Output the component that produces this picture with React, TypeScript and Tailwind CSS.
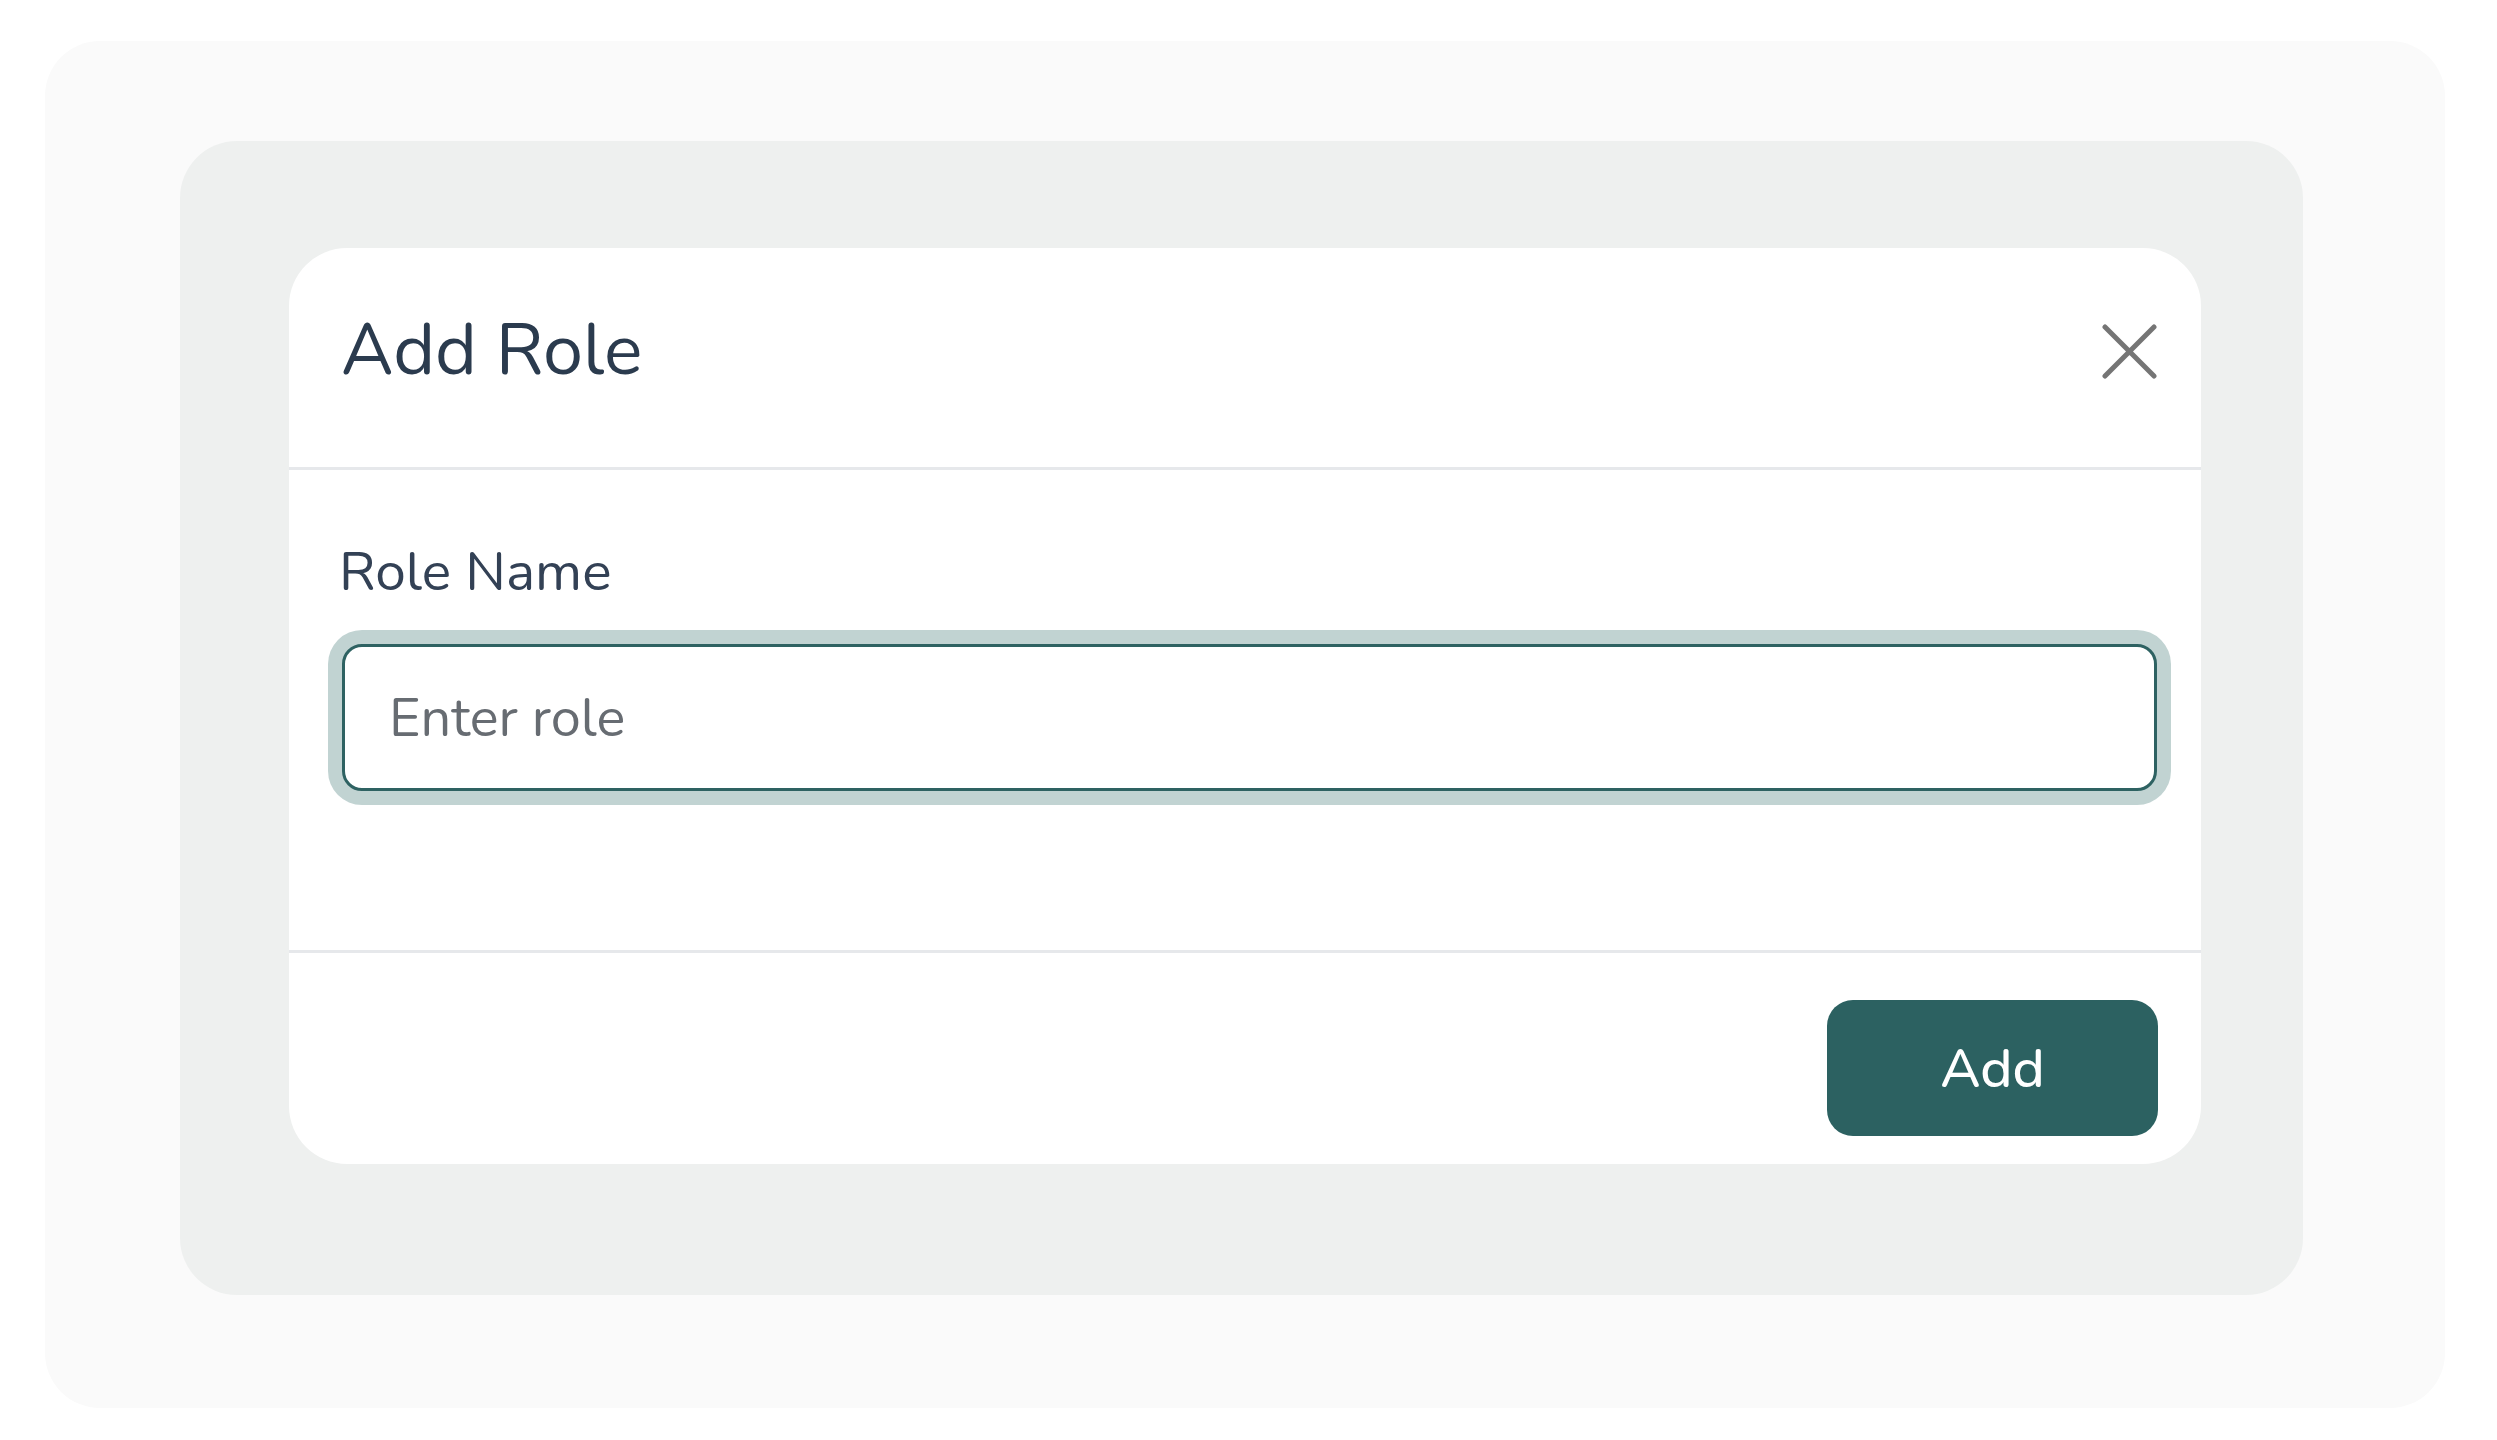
import React from "react";

export default function App() {
  return (
    <div
      className="min-h-screen w-full bg-white pt-[41px] pl-[45px]"
      style={{ fontFamily: "Nunito, Lato, 'Noto Sans', sans-serif" }}
    >
      <div className="w-[2400px] h-[1367px] rounded-[55px] bg-[#fafafa] pt-[100px] pl-[135px]">
        <div className="w-[2123px] h-[1154px] rounded-[57px] bg-[#eef0ef] pt-[107px] pl-[109px]">
          <div className="w-[1912px] rounded-[58px] bg-white flex flex-col">
            {/* Header */}
            <div className="flex items-center justify-between pt-[59px] pb-[74px] pl-[52px] pr-[44px] border-b-[3px] border-[#e6e8eb]">
              <h2 className="text-[72px] leading-[1.2] font-normal text-[#2b3b4e]">Add Role</h2>
              <button className="mt-[2px] w-[55px] h-[55px] flex items-center justify-center" aria-label="Close">
                <svg width="55" height="55" viewBox="0 0 55 55" fill="none">
                  <path d="M3 3 L52 52 M52 3 L3 52" stroke="#757575" strokeWidth="5" strokeLinecap="round" />
                </svg>
              </button>
            </div>
            {/* Body */}
            <div className="flex flex-col pl-[53px] pr-[44px] pt-[69px] pb-[159px] border-b-[3px] border-[#e6e8eb]">
              <label className="-ml-[3px] text-[55px] leading-[1.2] text-[#334155]">Role Name</label>
              <input
                type="text"
                placeholder="Enter role"
                className="mt-[39px] h-[147px] w-full rounded-[20px] border-[3px] border-[#2e6262] bg-white pl-[44px] text-[54px] text-[#334155] placeholder:text-[#676c72] outline-none shadow-[0_0_0_14px_#c1d3d2]"
              />
            </div>
            {/* Footer */}
            <div className="flex justify-end pt-[47px] pb-[28px] pr-[43px]">
              <button className="w-[331px] h-[136px] rounded-[26px] bg-[#2c6161] text-white text-[55px] font-medium leading-none">
                Add
              </button>
            </div>
          </div>
        </div>
      </div>
    </div>
  );
}
